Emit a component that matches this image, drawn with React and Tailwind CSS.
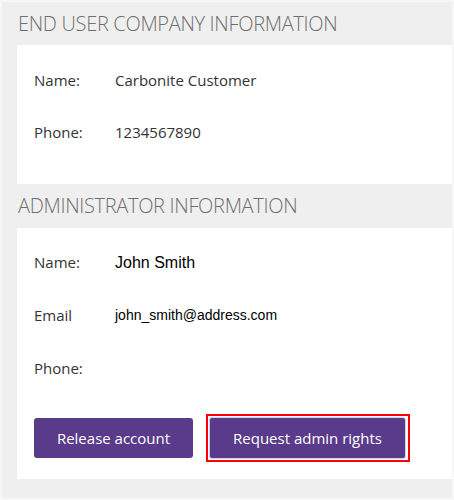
export default function App() {
  const os = { fontFamily: '"Open Sans", "Liberation Sans", sans-serif' };
  const ar = { fontFamily: '"Liberation Sans", Arial, sans-serif' };
  return (
    <div className="w-[454px] h-[500px] bg-[#efefef] border-2 border-[#f7f7f7] pl-[15px] overflow-hidden" style={os}>
      <div className="h-[43px] flex items-center pl-[1px] text-[20px] font-light text-[#6f6f6f] tracking-[-0.32px]">
        END USER COMPANY INFORMATION
      </div>
      <div className="bg-white pt-[9px] pb-[26px] pl-[17px]">
        <div className="h-[52px] flex items-center text-[15px] text-[#333]">
          <span className="w-[81px]">Name:</span>
          <span>Carbonite Customer</span>
        </div>
        <div className="h-[52px] flex items-center text-[15px] text-[#333]">
          <span className="w-[81px]">Phone:</span>
          <span>1234567890</span>
        </div>
      </div>
      <div className="h-[44px] flex items-center pl-[1px] text-[20px] font-light text-[#6f6f6f] tracking-[-0.32px]">
        ADMINISTRATOR INFORMATION
      </div>
      <div className="bg-white pt-[8px] pb-[17px] pl-[17px]">
        <div className="h-[53px] flex items-center text-[15px] text-[#333]">
          <span className="w-[81px]">Name:</span>
          <span className="text-[16px] text-black" style={ar}>John Smith</span>
        </div>
        <div className="h-[53px] flex items-center text-[15px] text-[#333]">
          <span className="w-[81px]">Email</span>
          <span className="text-[14px] text-black" style={ar}>john_smith@address.com</span>
        </div>
        <div className="h-[53px] flex items-center text-[15px] text-[#333]">
          <span className="w-[81px]">Phone:</span>
          <span></span>
        </div>
        <div className="mt-[23px] flex items-start">
          <button className="w-[159px] h-[40px] rounded-[3px] bg-[#5a3a8a] text-white text-[15px]" style={os}>
            Release account
          </button>
          <div className="ml-[13px] mt-[-4px] border-2 border-[#ff0000] p-[1px] pr-[2px]">
            <button className="w-[197px] h-[42px] rounded-[3px] bg-[#5a3a8a] border border-[#d8d0e4] text-white text-[15px]" style={os}>
              Request admin rights
            </button>
          </div>
        </div>
      </div>
    </div>
  );
}
